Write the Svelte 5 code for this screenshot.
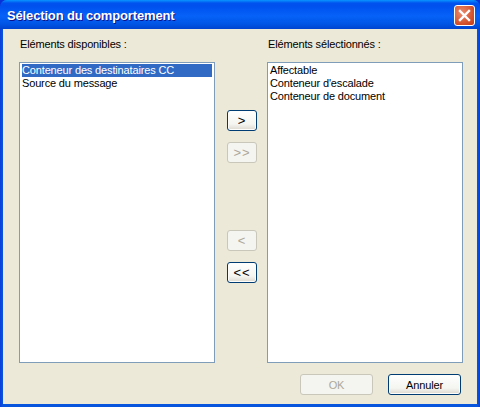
<script>
  const available = ['Conteneur des destinataires CC', 'Source du message'];
  const selected = ['Affectable', "Conteneur d'escalade", 'Conteneur de document'];
</script>

<div class="window">
  <div class="titlebar">
    <span class="title">Sélection du comportement</span>
    <span class="close">
      <svg width="13" height="13" viewBox="0 0 13 13">
        <path d="M2 2 L11 11 M11 2 L2 11" stroke="#fff" stroke-width="2.4" stroke-linecap="square" fill="none" />
      </svg>
    </span>
  </div>
  <div class="client">
    <div class="lists">
      <div class="col">
        <div class="label">Eléments disponibles :</div>
        <div class="listbox">
          {#each available as item, i}
            <div class="item" class:sel={i === 0}>{item}</div>
          {/each}
        </div>
      </div>
      <div class="mid">
        <div class="group">
          <button class="btn small">&gt;</button>
          <button class="btn small" disabled>&gt;&gt;</button>
        </div>
        <div class="group">
          <button class="btn small" disabled>&lt;</button>
          <button class="btn small">&lt;&lt;</button>
        </div>
      </div>
      <div class="col">
        <div class="label">Eléments sélectionnés :</div>
        <div class="listbox">
          {#each selected as item}
            <div class="item">{item}</div>
          {/each}
        </div>
      </div>
    </div>
    <div class="actions">
      <button class="btn wide" disabled>OK</button>
      <button class="btn wide">Annuler</button>
    </div>
  </div>
</div>

<style>
  :global(body) {
    margin: 0;
    background: #0831d9;
  }
  .window {
    width: 480px;
    height: 407px;
    box-sizing: border-box;
    display: flex;
    flex-direction: column;
    padding: 0 3px 3px;
    background: linear-gradient(90deg, #0a3fd8 0, #0855dd 3px, #0855dd 477px, #0a3fd8 480px);
    border-radius: 7px 7px 0 0;
    font-family: "Liberation Sans", Arial, sans-serif;
    font-size: 11px;
    letter-spacing: -0.15px;
    color: #000;
    overflow: hidden;
  }
  .titlebar {
    height: 29px;
    margin: 0 -3px;
    padding: 1px 5px 0 7px;
    box-sizing: border-box;
    flex: none;
    display: flex;
    align-items: center;
    justify-content: space-between;
    background: linear-gradient(180deg, #0997ff 0, #0053ee 3px, #0050ee 6px, #0662f8 16px, #0055e5 24px, #0043cf 29px);
  }
  .title {
    color: #fff;
    font-family: "Liberation Sans", sans-serif;
    font-weight: 700;
    font-size: 13px;
    letter-spacing: -0.15px;
    text-shadow: 1px 1px 0 #0f1089;
  }
  .close {
    width: 21px;
    height: 21px;
    box-sizing: border-box;
    display: flex;
    align-items: center;
    justify-content: center;
    border: 1px solid #fff;
    border-radius: 3px;
    background: radial-gradient(circle at 35% 35%, #e98d6e, #d4512c 65%, #c23a17);
  }
  .client {
    flex: 1;
    min-height: 0;
    display: flex;
    flex-direction: column;
    padding: 8px 14px 9px 16px;
    background: #ece9d8;
  }
  .lists {
    display: flex;
    justify-content: space-between;
    align-items: flex-start;
  }
  .col {
    width: 196px;
  }
  .label {
    height: 25px;
    padding-left: 1px;
    line-height: 14px;
  }
  .listbox {
    height: 301px;
    box-sizing: border-box;
    padding: 1px 2px;
    background: #fff;
    border: 1px solid #7f9db9;
  }
  .item {
    height: 13px;
    line-height: 13px;
    white-space: nowrap;
  }
  .item.sel {
    background: #316ac5;
    color: #fff;
  }
  .mid {
    width: 30px;
    height: 173px;
    margin-top: 73px;
    margin-left: 2px;
    display: flex;
    flex-direction: column;
    justify-content: space-between;
  }
  .group {
    display: flex;
    flex-direction: column;
    gap: 11px;
  }
  .btn {
    box-sizing: border-box;
    padding: 0;
    font: inherit;
    letter-spacing: inherit;
    color: #000;
    border: 1px solid #003c74;
    border-radius: 3px;
    background: linear-gradient(180deg, #fff 0, #f4f4f0 70%, #dcd8ce 100%);
    box-shadow: inset 0 0 0 1px #fdfdfb;
  }
  .btn:disabled {
    color: #aca899;
    border-color: #c9c7ba;
    background: #f4f4f0;
    box-shadow: none;
  }
  .small {
    width: 30px;
    height: 21px;
    font-size: 13px;
    letter-spacing: 1px;
  }
  .actions {
    margin-top: 11px;
    display: flex;
    justify-content: flex-end;
    gap: 15px;
    padding-right: 2px;
  }
  .wide {
    width: 73px;
    height: 21px;
  }
</style>
